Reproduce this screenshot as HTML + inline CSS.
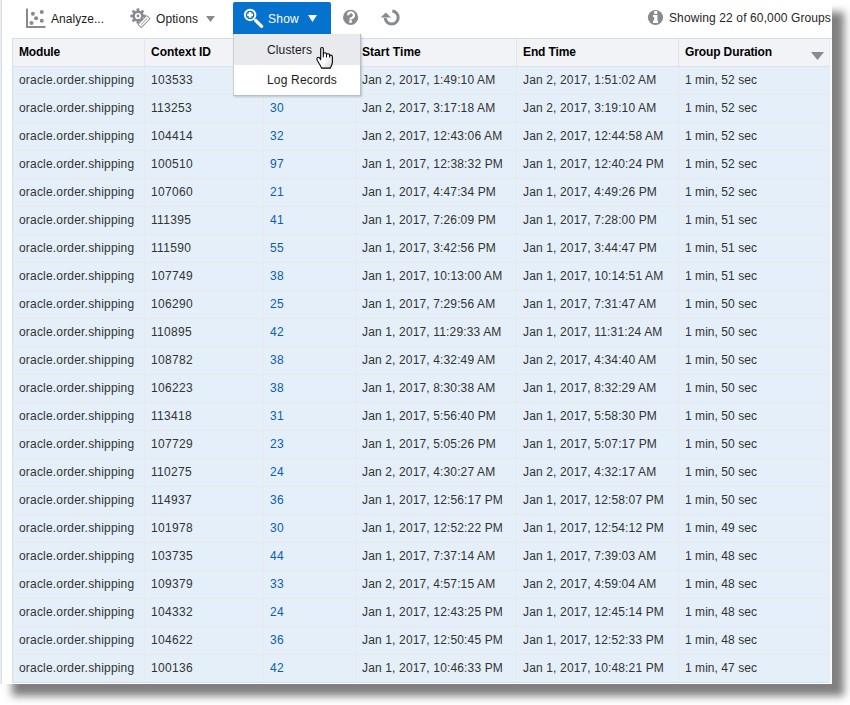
<!DOCTYPE html>
<html><head><meta charset="utf-8"><style>
html,body{margin:0;padding:0;width:850px;height:705px;overflow:hidden;background:#fff;}
*{box-sizing:border-box;}
body{font-family:"Liberation Sans",sans-serif;font-size:12px;color:#333;}
.a{position:absolute;}
.t{position:absolute;white-space:nowrap;line-height:14px;}
#page{position:absolute;left:0;top:0;width:832px;height:684px;background:#fff;box-shadow:12px 12px 8px rgba(0,0,0,0.5);}
.hd{font-weight:bold;color:#000;}
.lk{color:#0d5cae;}
</style></head><body>
<div id="page">

<div class="a" style="left:0;top:0;width:1px;height:684px;background:#ededed"></div>
<div class="a" style="left:1px;top:0;width:1px;height:684px;background:#d5dee6"></div>
<div class="a" style="left:12px;top:38px;width:820px;height:1px;background:#d7dfe6"></div>
<div class="a" style="left:12px;top:39px;width:817px;height:27px;background:#f2f3f6"></div>
<div class="a" style="left:12px;top:66px;width:817px;height:1px;background:#dbe0e5"></div>
<div class="a" style="left:12px;top:38px;width:1px;height:645px;background:#d7dfe6"></div>
<div class="a" style="left:829px;top:39px;width:1px;height:644px;background:#e8ebee"></div>
<div class="a" style="left:830px;top:39px;width:2px;height:644px;background:#f7f9fb"></div>
<div class="a" style="left:13px;top:67px;width:816px;height:615px;background:#e4eff9"></div>
<div class="a" style="left:13px;top:94px;width:816px;height:1px;background:#e7e8e8"></div>
<div class="a" style="left:13px;top:122px;width:816px;height:1px;background:#e7e8e8"></div>
<div class="a" style="left:13px;top:150px;width:816px;height:1px;background:#e7e8e8"></div>
<div class="a" style="left:13px;top:178px;width:816px;height:1px;background:#e7e8e8"></div>
<div class="a" style="left:13px;top:206px;width:816px;height:1px;background:#e7e8e8"></div>
<div class="a" style="left:13px;top:234px;width:816px;height:1px;background:#e7e8e8"></div>
<div class="a" style="left:13px;top:262px;width:816px;height:1px;background:#e7e8e8"></div>
<div class="a" style="left:13px;top:290px;width:816px;height:1px;background:#e7e8e8"></div>
<div class="a" style="left:13px;top:318px;width:816px;height:1px;background:#e7e8e8"></div>
<div class="a" style="left:13px;top:346px;width:816px;height:1px;background:#e7e8e8"></div>
<div class="a" style="left:13px;top:374px;width:816px;height:1px;background:#e7e8e8"></div>
<div class="a" style="left:13px;top:402px;width:816px;height:1px;background:#e7e8e8"></div>
<div class="a" style="left:13px;top:430px;width:816px;height:1px;background:#e7e8e8"></div>
<div class="a" style="left:13px;top:458px;width:816px;height:1px;background:#e7e8e8"></div>
<div class="a" style="left:13px;top:486px;width:816px;height:1px;background:#e7e8e8"></div>
<div class="a" style="left:13px;top:514px;width:816px;height:1px;background:#e7e8e8"></div>
<div class="a" style="left:13px;top:542px;width:816px;height:1px;background:#e7e8e8"></div>
<div class="a" style="left:13px;top:570px;width:816px;height:1px;background:#e7e8e8"></div>
<div class="a" style="left:13px;top:598px;width:816px;height:1px;background:#e7e8e8"></div>
<div class="a" style="left:13px;top:626px;width:816px;height:1px;background:#e7e8e8"></div>
<div class="a" style="left:13px;top:654px;width:816px;height:1px;background:#e7e8e8"></div>
<div class="a" style="left:13px;top:682px;width:816px;height:1px;background:#d8dfe6"></div>
<div class="a" style="left:144px;top:39px;width:1px;height:27px;background:#e3e5e8"></div>
<div class="a" style="left:144px;top:67px;width:1px;height:615px;background:#e8eaea"></div>
<div class="a" style="left:263px;top:39px;width:1px;height:27px;background:#e3e5e8"></div>
<div class="a" style="left:263px;top:67px;width:1px;height:615px;background:#e8eaea"></div>
<div class="a" style="left:355px;top:39px;width:1px;height:27px;background:#e3e5e8"></div>
<div class="a" style="left:355px;top:67px;width:1px;height:615px;background:#e8eaea"></div>
<div class="a" style="left:516px;top:39px;width:1px;height:27px;background:#e3e5e8"></div>
<div class="a" style="left:516px;top:67px;width:1px;height:615px;background:#e8eaea"></div>
<div class="a" style="left:678px;top:39px;width:1px;height:27px;background:#e3e5e8"></div>
<div class="a" style="left:678px;top:67px;width:1px;height:615px;background:#e8eaea"></div>
<div class="t hd" style="left:19px;top:45px;letter-spacing:-0.166px;">Module</div>
<div class="t hd" style="left:151px;top:45px;">Context ID</div>
<div class="t hd" style="left:362px;top:45px;letter-spacing:0.032px;">Start Time</div>
<div class="t hd" style="left:523px;top:45px;letter-spacing:-0.126px;">End Time</div>
<div class="t hd" style="left:685px;top:45px;letter-spacing:-0.118px;">Group Duration</div>
<svg class="a" style="left:809px;top:50px" width="18" height="12"><path d="M2 2 L15 2 L8.5 10 Z" fill="#878a8f"/></svg>
<div class="t" style="left:19px;top:73px;letter-spacing:0.187px;">oracle.order.shipping</div>
<div class="t" style="left:151px;top:73px;letter-spacing:0.326px;">103533</div>
<div class="t" style="left:362px;top:73px;letter-spacing:0.141px;">Jan 2, 2017, 1:49:10 AM</div>
<div class="t" style="left:523px;top:73px;letter-spacing:0.141px;">Jan 2, 2017, 1:51:02 AM</div>
<div class="t" style="left:685px;top:73px;letter-spacing:0.049px;">1 min, 52 sec</div>
<div class="t" style="left:19px;top:101px;letter-spacing:0.187px;">oracle.order.shipping</div>
<div class="t" style="left:151px;top:101px;letter-spacing:0.326px;">113253</div>
<div class="t lk" style="left:270px;top:101px;letter-spacing:0.326px;">30</div>
<div class="t" style="left:362px;top:101px;letter-spacing:0.141px;">Jan 2, 2017, 3:17:18 AM</div>
<div class="t" style="left:523px;top:101px;letter-spacing:0.141px;">Jan 2, 2017, 3:19:10 AM</div>
<div class="t" style="left:685px;top:101px;letter-spacing:0.049px;">1 min, 52 sec</div>
<div class="t" style="left:19px;top:129px;letter-spacing:0.187px;">oracle.order.shipping</div>
<div class="t" style="left:151px;top:129px;letter-spacing:0.326px;">104414</div>
<div class="t lk" style="left:270px;top:129px;letter-spacing:0.326px;">32</div>
<div class="t" style="left:362px;top:129px;letter-spacing:0.149px;">Jan 2, 2017, 12:43:06 AM</div>
<div class="t" style="left:523px;top:129px;letter-spacing:0.149px;">Jan 2, 2017, 12:44:58 AM</div>
<div class="t" style="left:685px;top:129px;letter-spacing:0.049px;">1 min, 52 sec</div>
<div class="t" style="left:19px;top:157px;letter-spacing:0.187px;">oracle.order.shipping</div>
<div class="t" style="left:151px;top:157px;letter-spacing:0.326px;">100510</div>
<div class="t lk" style="left:270px;top:157px;letter-spacing:0.326px;">97</div>
<div class="t" style="left:362px;top:157px;letter-spacing:0.149px;">Jan 1, 2017, 12:38:32 PM</div>
<div class="t" style="left:523px;top:157px;letter-spacing:0.149px;">Jan 1, 2017, 12:40:24 PM</div>
<div class="t" style="left:685px;top:157px;letter-spacing:0.049px;">1 min, 52 sec</div>
<div class="t" style="left:19px;top:185px;letter-spacing:0.187px;">oracle.order.shipping</div>
<div class="t" style="left:151px;top:185px;letter-spacing:0.326px;">107060</div>
<div class="t lk" style="left:270px;top:185px;letter-spacing:0.326px;">21</div>
<div class="t" style="left:362px;top:185px;letter-spacing:0.141px;">Jan 1, 2017, 4:47:34 PM</div>
<div class="t" style="left:523px;top:185px;letter-spacing:0.141px;">Jan 1, 2017, 4:49:26 PM</div>
<div class="t" style="left:685px;top:185px;letter-spacing:0.049px;">1 min, 52 sec</div>
<div class="t" style="left:19px;top:213px;letter-spacing:0.187px;">oracle.order.shipping</div>
<div class="t" style="left:151px;top:213px;letter-spacing:0.326px;">111395</div>
<div class="t lk" style="left:270px;top:213px;letter-spacing:0.326px;">41</div>
<div class="t" style="left:362px;top:213px;letter-spacing:0.141px;">Jan 1, 2017, 7:26:09 PM</div>
<div class="t" style="left:523px;top:213px;letter-spacing:0.141px;">Jan 1, 2017, 7:28:00 PM</div>
<div class="t" style="left:685px;top:213px;letter-spacing:0.049px;">1 min, 51 sec</div>
<div class="t" style="left:19px;top:241px;letter-spacing:0.187px;">oracle.order.shipping</div>
<div class="t" style="left:151px;top:241px;letter-spacing:0.326px;">111590</div>
<div class="t lk" style="left:270px;top:241px;letter-spacing:0.326px;">55</div>
<div class="t" style="left:362px;top:241px;letter-spacing:0.141px;">Jan 1, 2017, 3:42:56 PM</div>
<div class="t" style="left:523px;top:241px;letter-spacing:0.141px;">Jan 1, 2017, 3:44:47 PM</div>
<div class="t" style="left:685px;top:241px;letter-spacing:0.049px;">1 min, 51 sec</div>
<div class="t" style="left:19px;top:269px;letter-spacing:0.187px;">oracle.order.shipping</div>
<div class="t" style="left:151px;top:269px;letter-spacing:0.326px;">107749</div>
<div class="t lk" style="left:270px;top:269px;letter-spacing:0.326px;">38</div>
<div class="t" style="left:362px;top:269px;letter-spacing:0.149px;">Jan 1, 2017, 10:13:00 AM</div>
<div class="t" style="left:523px;top:269px;letter-spacing:0.149px;">Jan 1, 2017, 10:14:51 AM</div>
<div class="t" style="left:685px;top:269px;letter-spacing:0.049px;">1 min, 51 sec</div>
<div class="t" style="left:19px;top:297px;letter-spacing:0.187px;">oracle.order.shipping</div>
<div class="t" style="left:151px;top:297px;letter-spacing:0.326px;">106290</div>
<div class="t lk" style="left:270px;top:297px;letter-spacing:0.326px;">25</div>
<div class="t" style="left:362px;top:297px;letter-spacing:0.141px;">Jan 1, 2017, 7:29:56 AM</div>
<div class="t" style="left:523px;top:297px;letter-spacing:0.141px;">Jan 1, 2017, 7:31:47 AM</div>
<div class="t" style="left:685px;top:297px;letter-spacing:0.049px;">1 min, 50 sec</div>
<div class="t" style="left:19px;top:325px;letter-spacing:0.187px;">oracle.order.shipping</div>
<div class="t" style="left:151px;top:325px;letter-spacing:0.326px;">110895</div>
<div class="t lk" style="left:270px;top:325px;letter-spacing:0.326px;">42</div>
<div class="t" style="left:362px;top:325px;letter-spacing:0.149px;">Jan 1, 2017, 11:29:33 AM</div>
<div class="t" style="left:523px;top:325px;letter-spacing:0.149px;">Jan 1, 2017, 11:31:24 AM</div>
<div class="t" style="left:685px;top:325px;letter-spacing:0.049px;">1 min, 50 sec</div>
<div class="t" style="left:19px;top:353px;letter-spacing:0.187px;">oracle.order.shipping</div>
<div class="t" style="left:151px;top:353px;letter-spacing:0.326px;">108782</div>
<div class="t lk" style="left:270px;top:353px;letter-spacing:0.326px;">38</div>
<div class="t" style="left:362px;top:353px;letter-spacing:0.141px;">Jan 2, 2017, 4:32:49 AM</div>
<div class="t" style="left:523px;top:353px;letter-spacing:0.141px;">Jan 2, 2017, 4:34:40 AM</div>
<div class="t" style="left:685px;top:353px;letter-spacing:0.049px;">1 min, 50 sec</div>
<div class="t" style="left:19px;top:381px;letter-spacing:0.187px;">oracle.order.shipping</div>
<div class="t" style="left:151px;top:381px;letter-spacing:0.326px;">106223</div>
<div class="t lk" style="left:270px;top:381px;letter-spacing:0.326px;">38</div>
<div class="t" style="left:362px;top:381px;letter-spacing:0.141px;">Jan 1, 2017, 8:30:38 AM</div>
<div class="t" style="left:523px;top:381px;letter-spacing:0.141px;">Jan 1, 2017, 8:32:29 AM</div>
<div class="t" style="left:685px;top:381px;letter-spacing:0.049px;">1 min, 50 sec</div>
<div class="t" style="left:19px;top:409px;letter-spacing:0.187px;">oracle.order.shipping</div>
<div class="t" style="left:151px;top:409px;letter-spacing:0.326px;">113418</div>
<div class="t lk" style="left:270px;top:409px;letter-spacing:0.326px;">31</div>
<div class="t" style="left:362px;top:409px;letter-spacing:0.141px;">Jan 1, 2017, 5:56:40 PM</div>
<div class="t" style="left:523px;top:409px;letter-spacing:0.141px;">Jan 1, 2017, 5:58:30 PM</div>
<div class="t" style="left:685px;top:409px;letter-spacing:0.049px;">1 min, 50 sec</div>
<div class="t" style="left:19px;top:437px;letter-spacing:0.187px;">oracle.order.shipping</div>
<div class="t" style="left:151px;top:437px;letter-spacing:0.326px;">107729</div>
<div class="t lk" style="left:270px;top:437px;letter-spacing:0.326px;">23</div>
<div class="t" style="left:362px;top:437px;letter-spacing:0.141px;">Jan 1, 2017, 5:05:26 PM</div>
<div class="t" style="left:523px;top:437px;letter-spacing:0.141px;">Jan 1, 2017, 5:07:17 PM</div>
<div class="t" style="left:685px;top:437px;letter-spacing:0.049px;">1 min, 50 sec</div>
<div class="t" style="left:19px;top:465px;letter-spacing:0.187px;">oracle.order.shipping</div>
<div class="t" style="left:151px;top:465px;letter-spacing:0.326px;">110275</div>
<div class="t lk" style="left:270px;top:465px;letter-spacing:0.326px;">24</div>
<div class="t" style="left:362px;top:465px;letter-spacing:0.141px;">Jan 2, 2017, 4:30:27 AM</div>
<div class="t" style="left:523px;top:465px;letter-spacing:0.141px;">Jan 2, 2017, 4:32:17 AM</div>
<div class="t" style="left:685px;top:465px;letter-spacing:0.049px;">1 min, 50 sec</div>
<div class="t" style="left:19px;top:493px;letter-spacing:0.187px;">oracle.order.shipping</div>
<div class="t" style="left:151px;top:493px;letter-spacing:0.326px;">114937</div>
<div class="t lk" style="left:270px;top:493px;letter-spacing:0.326px;">36</div>
<div class="t" style="left:362px;top:493px;letter-spacing:0.149px;">Jan 1, 2017, 12:56:17 PM</div>
<div class="t" style="left:523px;top:493px;letter-spacing:0.149px;">Jan 1, 2017, 12:58:07 PM</div>
<div class="t" style="left:685px;top:493px;letter-spacing:0.049px;">1 min, 50 sec</div>
<div class="t" style="left:19px;top:521px;letter-spacing:0.187px;">oracle.order.shipping</div>
<div class="t" style="left:151px;top:521px;letter-spacing:0.326px;">101978</div>
<div class="t lk" style="left:270px;top:521px;letter-spacing:0.326px;">30</div>
<div class="t" style="left:362px;top:521px;letter-spacing:0.149px;">Jan 1, 2017, 12:52:22 PM</div>
<div class="t" style="left:523px;top:521px;letter-spacing:0.149px;">Jan 1, 2017, 12:54:12 PM</div>
<div class="t" style="left:685px;top:521px;letter-spacing:0.049px;">1 min, 49 sec</div>
<div class="t" style="left:19px;top:549px;letter-spacing:0.187px;">oracle.order.shipping</div>
<div class="t" style="left:151px;top:549px;letter-spacing:0.326px;">103735</div>
<div class="t lk" style="left:270px;top:549px;letter-spacing:0.326px;">44</div>
<div class="t" style="left:362px;top:549px;letter-spacing:0.141px;">Jan 1, 2017, 7:37:14 AM</div>
<div class="t" style="left:523px;top:549px;letter-spacing:0.141px;">Jan 1, 2017, 7:39:03 AM</div>
<div class="t" style="left:685px;top:549px;letter-spacing:0.049px;">1 min, 48 sec</div>
<div class="t" style="left:19px;top:577px;letter-spacing:0.187px;">oracle.order.shipping</div>
<div class="t" style="left:151px;top:577px;letter-spacing:0.326px;">109379</div>
<div class="t lk" style="left:270px;top:577px;letter-spacing:0.326px;">33</div>
<div class="t" style="left:362px;top:577px;letter-spacing:0.141px;">Jan 2, 2017, 4:57:15 AM</div>
<div class="t" style="left:523px;top:577px;letter-spacing:0.141px;">Jan 2, 2017, 4:59:04 AM</div>
<div class="t" style="left:685px;top:577px;letter-spacing:0.049px;">1 min, 48 sec</div>
<div class="t" style="left:19px;top:605px;letter-spacing:0.187px;">oracle.order.shipping</div>
<div class="t" style="left:151px;top:605px;letter-spacing:0.326px;">104332</div>
<div class="t lk" style="left:270px;top:605px;letter-spacing:0.326px;">24</div>
<div class="t" style="left:362px;top:605px;letter-spacing:0.149px;">Jan 1, 2017, 12:43:25 PM</div>
<div class="t" style="left:523px;top:605px;letter-spacing:0.149px;">Jan 1, 2017, 12:45:14 PM</div>
<div class="t" style="left:685px;top:605px;letter-spacing:0.049px;">1 min, 48 sec</div>
<div class="t" style="left:19px;top:633px;letter-spacing:0.187px;">oracle.order.shipping</div>
<div class="t" style="left:151px;top:633px;letter-spacing:0.326px;">104622</div>
<div class="t lk" style="left:270px;top:633px;letter-spacing:0.326px;">36</div>
<div class="t" style="left:362px;top:633px;letter-spacing:0.149px;">Jan 1, 2017, 12:50:45 PM</div>
<div class="t" style="left:523px;top:633px;letter-spacing:0.149px;">Jan 1, 2017, 12:52:33 PM</div>
<div class="t" style="left:685px;top:633px;letter-spacing:0.049px;">1 min, 48 sec</div>
<div class="t" style="left:19px;top:661px;letter-spacing:0.187px;">oracle.order.shipping</div>
<div class="t" style="left:151px;top:661px;letter-spacing:0.326px;">100136</div>
<div class="t lk" style="left:270px;top:661px;letter-spacing:0.326px;">42</div>
<div class="t" style="left:362px;top:661px;letter-spacing:0.149px;">Jan 1, 2017, 10:46:33 PM</div>
<div class="t" style="left:523px;top:661px;letter-spacing:0.149px;">Jan 1, 2017, 10:48:21 PM</div>
<div class="t" style="left:685px;top:661px;letter-spacing:0.049px;">1 min, 47 sec</div>
<!-- analyze icon -->
<svg class="a" style="left:20px;top:4px" width="30" height="28" viewBox="20 4 30 28">
 <rect x="26" y="8.5" width="2" height="19.5" fill="#878a8f"/>
 <rect x="26" y="26" width="19.5" height="2" fill="#878a8f"/>
 <circle cx="32.9" cy="13.7" r="2" fill="#878a8f"/>
 <circle cx="41.75" cy="12" r="2" fill="#878a8f"/>
 <circle cx="36.1" cy="18.3" r="2" fill="#878a8f"/>
 <circle cx="41.75" cy="20.8" r="2" fill="#878a8f"/>
 <circle cx="31.5" cy="23" r="2" fill="#878a8f"/>
</svg>
<div class="t" style="left:51px;top:12px;color:#1a1a1a;letter-spacing:0.031px;">Analyze...</div>
<!-- options gear -->
<svg class="a" style="left:126px;top:4px" width="28" height="28" viewBox="126 4 28 28">
 <g fill="#878a8f">
  <circle cx="138" cy="16" r="5.6"/>
  <rect x="136.6" y="8.4" width="2.8" height="15.2"/>
  <rect x="130.4" y="14.6" width="15.2" height="2.8"/>
  <rect x="136.6" y="8.4" width="2.8" height="15.2" transform="rotate(45 138 16)"/>
  <rect x="136.6" y="8.4" width="2.8" height="15.2" transform="rotate(-45 138 16)"/>
 </g>
 <circle cx="138" cy="16" r="3.1" fill="#fff"/>
 <circle cx="138" cy="16" r="1.4" fill="#878a8f"/>
 <g transform="rotate(-45 144 21.6)">
  <rect x="137.8" y="19.3" width="12.4" height="4.6" rx="0.6" fill="#fff" stroke="#878a8f" stroke-width="1"/>
  <line x1="139.8" y1="21.6" x2="148.2" y2="21.6" stroke="#878a8f" stroke-width="0.9"/>
 </g>
</svg>
<div class="t" style="left:156px;top:12px;color:#1a1a1a;letter-spacing:0.092px;">Options</div>
<svg class="a" style="left:204px;top:14px" width="14" height="10"><path d="M2 2 L11 2 L6.5 8 Z" fill="#878a8f"/></svg>
<!-- show button -->
<div class="a" style="left:233px;top:2px;width:98px;height:32px;background:#0572ce;border-radius:2px 2px 0 0"></div>
<svg class="a" style="left:238px;top:4px" width="28" height="28" viewBox="238 4 28 28">
 <circle cx="250.1" cy="14.9" r="5.25" fill="none" stroke="#fff" stroke-width="2"/>
 <rect x="247.2" y="13.6" width="5.8" height="2.6" fill="#fff"/>
 <rect x="248.8" y="12" width="2.6" height="5.8" fill="#fff"/>
 <line x1="255.6" y1="20.4" x2="261.6" y2="26.4" stroke="#fff" stroke-width="3.2" stroke-linecap="round"/>
</svg>
<div class="t" style="left:268px;top:12px;color:#fff;letter-spacing:0.246px;">Show</div>
<svg class="a" style="left:306px;top:13px" width="14" height="11"><path d="M2 2 L11 2 L6.5 9 Z" fill="#fff"/></svg>
<!-- help -->
<svg class="a" style="left:340px;top:6px" width="24" height="24" viewBox="340 6 24 24">
 <circle cx="350.6" cy="17.4" r="7.6" fill="#878a8f"/>
 <path d="M348.1 15.2 A2.9 2.9 0 1 1 352.45 17.7 L350.6 18.7 L350.6 19.5" fill="none" stroke="#fff" stroke-width="2.2"/>
 <rect x="349.3" y="20.1" width="2.5" height="2.7" fill="#fff"/>
</svg>
<!-- refresh -->
<svg class="a" style="left:378px;top:6px" width="24" height="24" viewBox="378 6 24 24">
 <path d="M392.3 11.1 A6.5 6.5 0 1 1 385.2 18" fill="none" stroke="#878a8f" stroke-width="3"/>
 <path d="M380.7 17.6 L391 17.6 L385.8 12.4 Z" fill="#878a8f"/>
</svg>
<!-- info -->
<svg class="a" style="left:645px;top:6px" width="24" height="24" viewBox="645 6 24 24">
 <circle cx="655.5" cy="17.5" r="7.6" fill="#878a8f"/>
 <rect x="654.2" y="11.1" width="3.1" height="2.8" fill="#fff"/>
 <path d="M653 15 L657.4 15 L657.4 20.6 L658.1 20.6 L658.1 23 L653 23 L653 20.6 L654.2 20.6 L654.2 17 L653 17 Z" fill="#fff"/>
</svg>
<div class="t" style="left:669px;top:11px;color:#262626;letter-spacing:0.119px;">Showing 22 of 60,000 Groups</div>
<!-- dropdown -->
<div class="a" style="left:233px;top:34px;width:128px;height:62px;background:#fff;border-left:1px solid #c7d0d8;border-right:1px solid #b5bfc8;border-bottom:1px solid #b5bfc8;box-shadow:1px 1px 2px rgba(60,70,80,0.25)">
 <div class="a" style="left:0;top:0;width:126px;height:31px;background:#e9eaed"></div>
</div>
<div class="t" style="left:267px;top:43px;color:#1a1a1a;letter-spacing:0.124px;">Clusters</div>
<div class="t" style="left:267px;top:73px;color:#1a1a1a;letter-spacing:0.178px;">Log Records</div>
<!-- cursor -->
<svg class="a" style="left:313px;top:44px" width="24" height="28" viewBox="-2 -2 24 28">
 <defs><linearGradient id="hg" x1="0" y1="0" x2="1" y2="1"><stop offset="0.55" stop-color="#fff"/><stop offset="1" stop-color="#d0d0d0"/></linearGradient></defs>
 <path d="M5.7,12.5 L5.7,2.8 Q5.7,1.5 7,1.5 Q8.3,1.5 8.3,2.8 L8.3,8 Q8.3,6.8 9.9,6.8 Q11.5,6.8 11.5,8.5 Q11.5,7.7 13.1,7.7 Q14.7,7.7 14.7,9.4 Q14.9,9 16,9 Q17.4,9.2 17.4,11 L17.4,16 Q17.4,17.8 16.6,19.2 L15.4,22.1 L6.6,22.1 Q5.5,19.5 4,17.2 L2.2,14.2 Q1.4,12.6 2.4,11.6 Q3.5,10.8 4.6,11.9 L5.7,13.6 Z" fill="url(#hg)" stroke="#000" stroke-width="1.1" stroke-linejoin="round"/>
 <path d="M8.3,8 L8.3,11.4 M11.5,8.5 L11.5,11.4 M14.7,9.4 L14.7,11.6" stroke="#000" stroke-width="1"/>
</svg>

</div></body></html>
